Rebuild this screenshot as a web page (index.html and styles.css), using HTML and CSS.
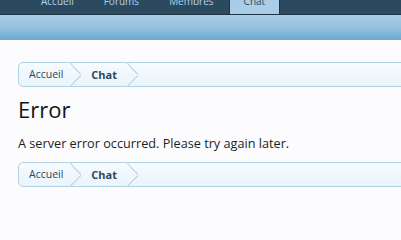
FILE: index.html
```html
<!DOCTYPE html>
<html lang="fr">
<head>
<meta charset="utf-8">
<title>Error</title>
<link rel="stylesheet" href="styles.css">
</head>
<body>
<header class="header">
  <nav class="nav-tabs">
    <a class="tab">Accueil</a>
    <a class="tab">Forums</a>
    <a class="tab">Membres</a>
    <a class="tab tab-selected">Chat</a>
  </nav>
  <div class="sub-bar"></div>
</header>
<main class="content">
  <div class="breadcrumb">
    <span class="crumb crumb-first">Accueil</span>
    <span class="crumb crumb-current">Chat</span>
  </div>
  <h1 class="title">Error</h1>
  <p class="message">A server error occurred. Please try again later.</p>
  <div class="breadcrumb">
    <span class="crumb crumb-first">Accueil</span>
    <span class="crumb crumb-current">Chat</span>
  </div>
</main>
</body>
</html>
```

FILE: styles.css
```css
html, body {
  margin: 0;
  padding: 0;
  overflow: hidden;
}
body {
  background: #fcfcff;
  font-family: "Open Sans", "DejaVu Sans", sans-serif;
  color: #141414;
}
.header {
  display: flex;
  flex-direction: column;
}
.nav-tabs {
  display: flex;
  height: 14px;
  background: #2c4a5f;
  border-bottom: 1px solid #1d3445;
  padding-left: 26px;
  overflow: hidden;
}
.tab {
  display: block;
  padding: 0 14px;
  margin-top: -6px;
  font-size: 10px;
  line-height: 14px;
  color: #b3d3ea;
  border-left: 1px solid transparent;
  border-right: 1px solid transparent;
}
.tab-selected {
  background: #a9cde6;
  color: #2b485c;
  padding: 0 14px;
  border-left: 1px solid #1d3445;
  border-right: 1px solid #1d3445;
  height: 30px;
}
.sub-bar {
  height: 25px;
  background: linear-gradient(to bottom, #a9cde6 0%, #95c1e0 50%, #6aa7d2 100%);
}
.content {
  padding: 22px 0 0 18px;
  margin-right: -12px;
}
.breadcrumb {
  display: flex;
  height: 23px;
  border: 1px solid #b3d1e4;
  border-radius: 5px;
  background: linear-gradient(to bottom, #f5fbff, #eaf4fb);
  font-size: 10.5px;
  line-height: 23px;
  color: #2b485c;
}
.crumb {
  position: relative;
  display: block;
}
.crumb-first {
  padding: 0 6px 0 10px;
}
.crumb-current {
  margin-left: 12px;
  padding: 0 9px 0 10px;
  font-weight: bold;
  font-size: 11px;
  color: #2b485c;
}
.crumb::after {
  content: "";
  position: absolute;
  top: -1px;
  right: -12px;
  width: 12px;
  height: 25px;
  background:
    linear-gradient(to top right, transparent 46%, #c3dbec 47%, #c3dbec 54%, transparent 55%) top / 100% 50% no-repeat,
    linear-gradient(to bottom right, transparent 46%, #c3dbec 47%, #c3dbec 54%, transparent 55%) bottom / 100% 50% no-repeat;
}
.title {
  margin: 8px 0 0;
  font-size: 22px;
  font-weight: normal;
  line-height: 28px;
  color: #141414;
}
.message {
  margin: 11px 0 10px;
  font-size: 12.7px;
  line-height: 18px;
  color: #1e1e1e;
}
```
